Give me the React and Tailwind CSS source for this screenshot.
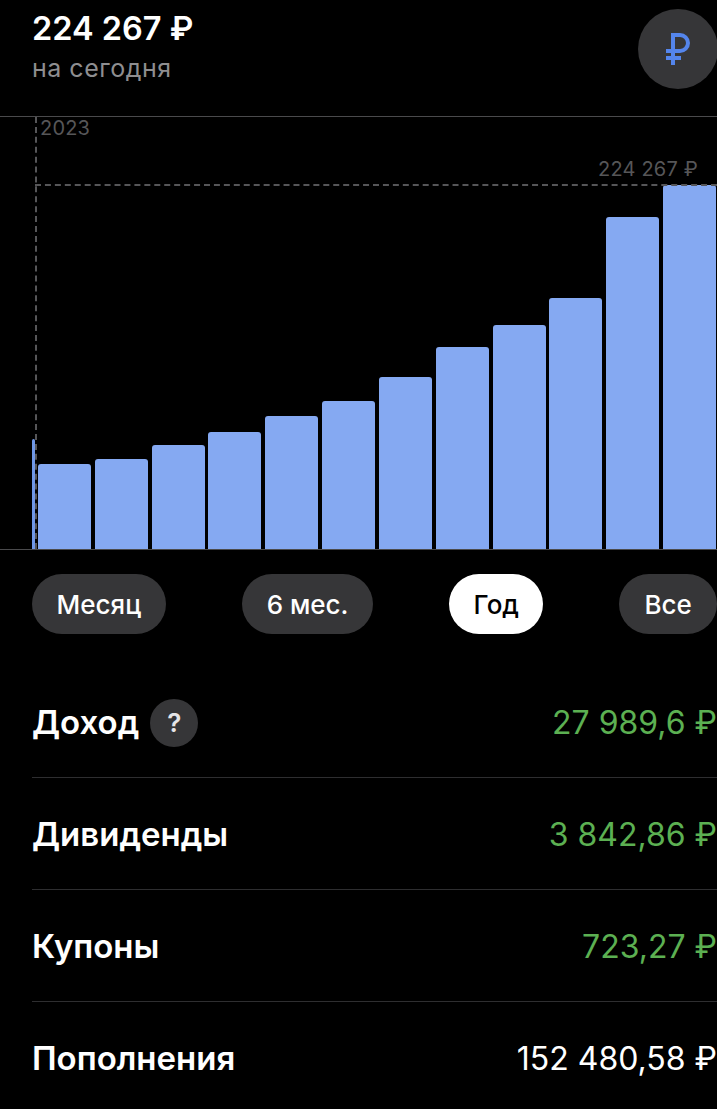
import React from 'react'

const bars = [85, 90, 104, 117, 133, 148, 172, 202, 224, 251, 332, 364]

const periods = [
  { label: 'Месяц', width: 'w-[134px]' },
  { label: '6 мес.', width: 'w-[132px]' },
  { label: 'Год', width: 'w-[94px]', active: true },
  { label: 'Все', width: 'w-[98px]' },
]

const rows = [
  { label: 'Доход', value: '27 989,6 ₽', green: true, hint: true },
  { label: 'Дивиденды', value: '3 842,86 ₽', green: true },
  { label: 'Купоны', value: '723,27 ₽', green: true },
  { label: 'Пополнения', value: '152 480,58 ₽' },
]

function RubleIcon() {
  return (
    <svg width="24" height="32" viewBox="0 0 24 32" fill="none" stroke="#5485ec" strokeWidth="4">
      <path d="M7 32V2h7a8 8 0 0 1 0 16H0" />
      <path d="M0 25h15" />
    </svg>
  )
}

function Chart() {
  return (
    <div className="relative h-[434px] border-t border-b border-[#4a4a4c]">
      {/* dashed markers sit over the bars */}
      <div className="absolute left-[35px] top-0 bottom-0 border-l-2 border-dashed border-[#565658]" />
      <div className="absolute left-[35px] right-0 top-[67px] border-t-2 border-dashed border-[#565658]" />
      <span className="absolute left-[40px] top-[-2px] text-[20px] leading-[26px] tracking-[0.2px] text-[#565658]">2023</span>
      <span className="absolute right-[19px] top-[39px] text-[20px] leading-[26px] tracking-[0.2px] text-[#565658]">224 267 ₽</span>

      <div className="flex h-full items-end pl-[32px] pr-px">
        <div className="mr-[3px] h-[110px] w-[3px] rounded-t-sm bg-[#6f97e6]" />
        <div className="flex flex-1 items-end gap-[3.8px]">
          {bars.map((height, i) => (
            <div
              key={i}
              className="flex-1 rounded-t-[3px] bg-[#85a9f2]"
              style={{ height }}
            />
          ))}
        </div>
      </div>
    </div>
  )
}

export default function App() {
  return (
    <div className="h-[1109px] w-[717px] overflow-hidden bg-black font-['Inter',sans-serif] text-white">
      <header className="flex h-[116px] justify-between pl-[32px]">
        <div className="pt-[8px]">
          <div className="text-[32.5px] font-semibold leading-[42px]">224 267 ₽</div>
          <div className="mt-[3px] text-[25px] leading-[30px] tracking-[0.5px] text-[#8e8e90]">на сегодня</div>
        </div>
        <div className="-mr-px mt-[9px] flex h-[80px] w-[80px] shrink-0 items-center justify-center rounded-full bg-[#363638]">
          <RubleIcon />
        </div>
      </header>

      <Chart />

      <div className="mt-[24px] flex gap-[76px] pl-[32px]">
        {periods.map((p) => (
          <div
            key={p.label}
            className={`flex h-[60px] items-center justify-center rounded-full pt-[1px] text-[26px] font-medium ${p.width} ${
              p.active ? 'bg-white text-black' : 'bg-[#363638] text-white'
            }`}
          >
            {p.label}
          </div>
        ))}
      </div>

      <div className="mt-[32px] pl-[32px]">
        {rows.map((row) => (
          <div
            key={row.label}
            className="flex h-[112px] items-center justify-between border-b border-[#2e2e30] pt-[2px] last:border-b-0"
          >
            <div className="flex items-center gap-[11px]">
              <span className="text-[33px] font-semibold">{row.label}</span>
              {row.hint && (
                <span className="flex h-[48px] w-[48px] items-center justify-center rounded-full bg-[#363638] text-[26px] font-semibold text-[#e5e5e7]">
                  ?
                </span>
              )}
            </div>
            <span className={`text-[32px] ${row.green ? 'text-[#5cb052]' : 'text-white'}`}>{row.value}</span>
          </div>
        ))}
      </div>
    </div>
  )
}
